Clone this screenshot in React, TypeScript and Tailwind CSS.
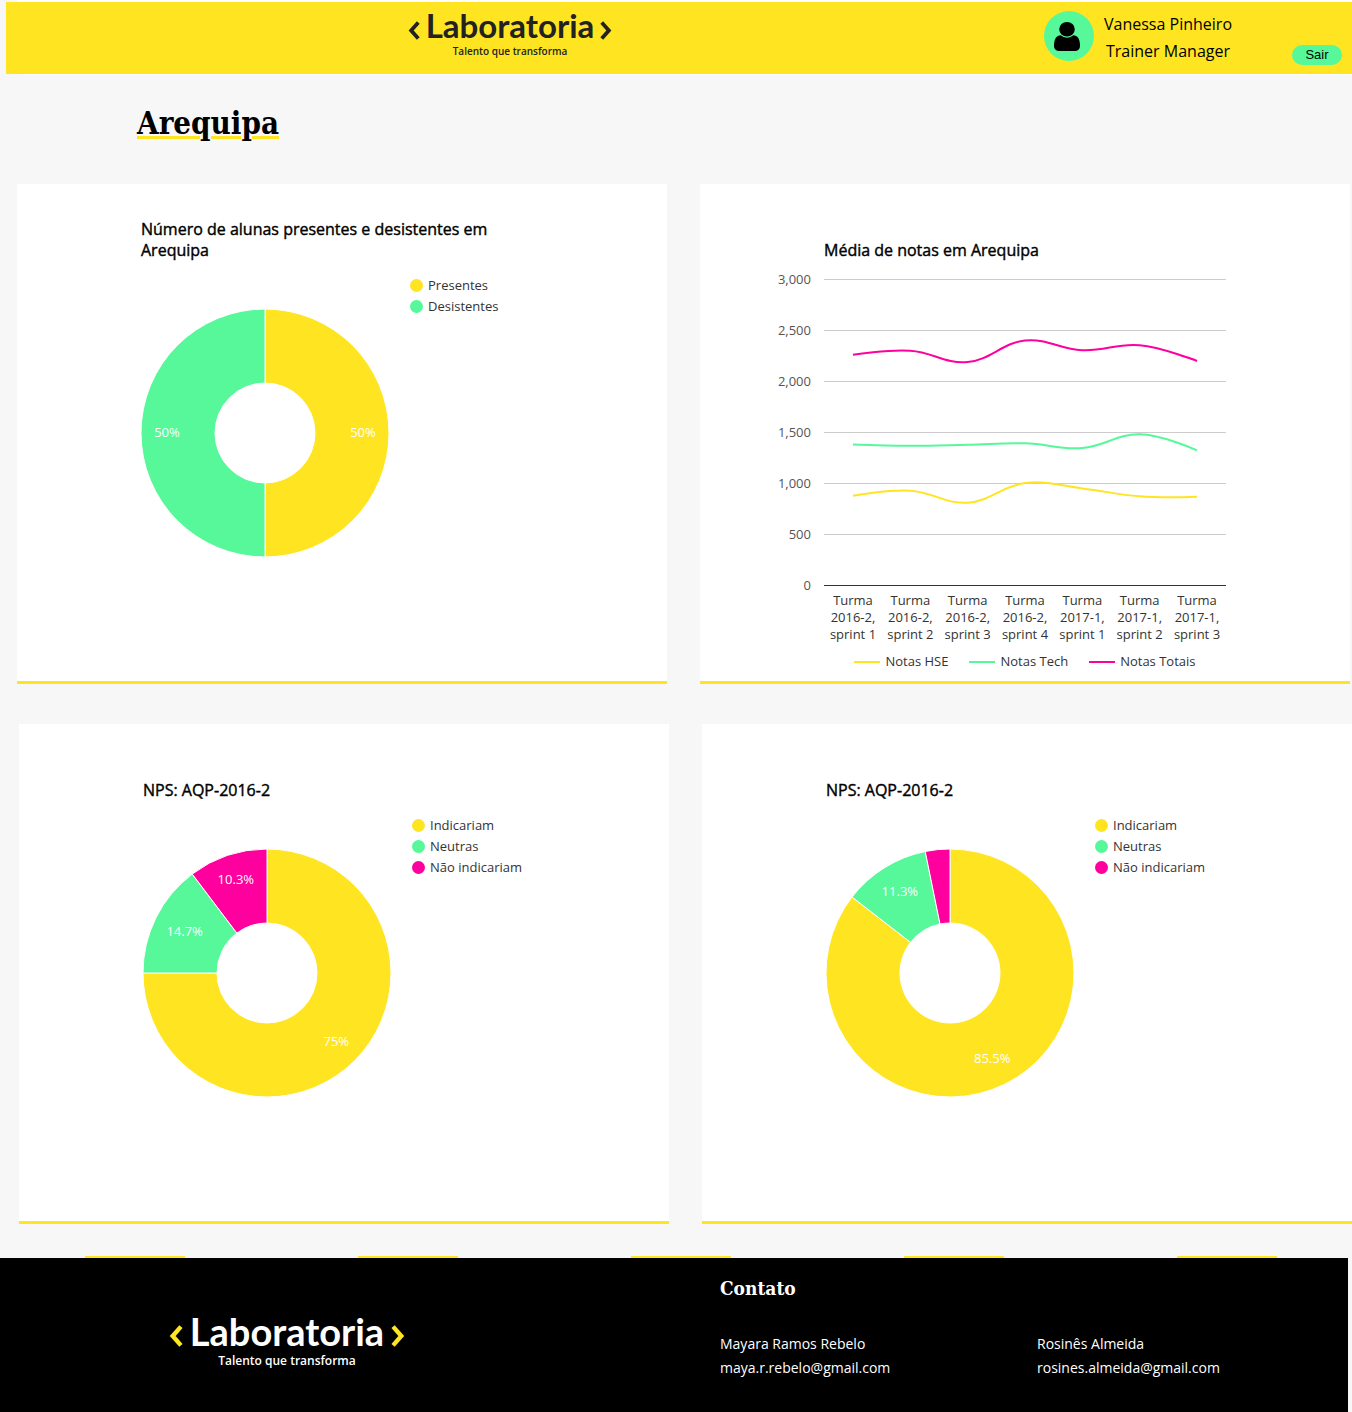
const YELLOW = "#ffe521";
const GREEN = "#56f89a";
const PINK = "#ff009e";

type Slice = { label: string; value: number; color: string; text?: string; textRadius?: number };

const attendance: Slice[] = [
  { label: "Presentes", value: 50, color: YELLOW, text: "50%" },
  { label: "Desistentes", value: 50, color: GREEN, text: "50%" },
];

const npsFirst: Slice[] = [
  { label: "Indicariam", value: 75, color: YELLOW, text: "75%" },
  { label: "Neutras", value: 14.7, color: GREEN, text: "14.7%", textRadius: 92 },
  { label: "Não indicariam", value: 10.3, color: PINK, text: "10.3%" },
];

const npsSecond: Slice[] = [
  { label: "Indicariam", value: 85.5, color: YELLOW, text: "85.5%", textRadius: 96 },
  { label: "Neutras", value: 11.3, color: GREEN, text: "11.3%", textRadius: 95 },
  { label: "Não indicariam", value: 3.2, color: PINK },
];

const RADIUS = 124;
const HOLE = 50;

function point(radius: number, share: number) {
  const angle = share * 2 * Math.PI;
  return [RADIUS + radius * Math.sin(angle), RADIUS - radius * Math.cos(angle)];
}

function Donut({ slices, title }: { slices: Slice[]; title: string }) {
  let start = 0;
  return (
    <svg viewBox="0 0 248 248" className="mt-[34px] h-[248px] w-[248px] shrink-0 overflow-visible" role="img" aria-label={title}>
      {slices.map((slice) => {
        const from = start;
        const to = start + slice.value / 100;
        start = to;
        const large = to - from > 0.5 ? 1 : 0;
        const [ax, ay] = point(RADIUS, from);
        const [bx, by] = point(RADIUS, to);
        const [cx, cy] = point(HOLE, to);
        const [dx, dy] = point(HOLE, from);
        const [tx, ty] = point(slice.textRadius ?? 98, (from + to) / 2);
        return (
          <g key={slice.label}>
            <path
              d={`M${ax} ${ay}A${RADIUS} ${RADIUS} 0 ${large} 1 ${bx} ${by}L${cx} ${cy}A${HOLE} ${HOLE} 0 ${large} 0 ${dx} ${dy}Z`}
              fill={slice.color}
              stroke="#ffffff"
              strokeWidth="1"
            />
            {slice.text && (
              <text x={tx} y={ty + 4} textAnchor="middle" fill="#ffffff" className="text-[13px]">
                {slice.text}
              </text>
            )}
          </g>
        );
      })}
    </svg>
  );
}

function Card({ title, children }: { title: string; children: React.ReactNode }) {
  return (
    <section className="min-h-[500px] border-b-3 border-[#ffe521] bg-white pt-[35px]">
      <div className="ml-[124px] flex h-[42px] w-[402px] items-end">
        <h2 className="text-base leading-[21px] text-black [-webkit-text-stroke:0.4px_black]">{title}</h2>
      </div>
      {children}
    </section>
  );
}

function DonutCard({ title, slices }: { title: string; slices: Slice[] }) {
  return (
    <Card title={title}>
      <div className="mt-[14px] ml-[124px] flex items-start gap-[21px]">
        <Donut slices={slices} title={title} />
        <ul className="text-[13px] leading-[21px] text-[#333333]">
          {slices.map((slice) => (
            <li key={slice.label} className="flex items-center gap-[5px]">
              <span className="h-[13px] w-[13px] rounded-full" style={{ backgroundColor: slice.color }} />
              {slice.label}
            </li>
          ))}
        </ul>
      </div>
    </Card>
  );
}

const sprints = [
  ["2016-2,", "sprint 1"],
  ["2016-2,", "sprint 2"],
  ["2016-2,", "sprint 3"],
  ["2016-2,", "sprint 4"],
  ["2017-1,", "sprint 1"],
  ["2017-1,", "sprint 2"],
  ["2017-1,", "sprint 3"],
];

const series = [
  { label: "Notas HSE", color: YELLOW, values: [880, 930, 812, 1004, 952, 874, 870] },
  { label: "Notas Tech", color: GREEN, values: [1383, 1369, 1380, 1394, 1348, 1482, 1325] },
  { label: "Notas Totais", color: PINK, values: [2263, 2302, 2191, 2402, 2306, 2355, 2200] },
];

const plotX = (i: number) => 83 + (i * 172) / 3;
const plotY = (value: number) => 316.5 - (value * 306) / 3000;

function smoothPath(values: number[]) {
  const pts = values.map((v, i) => [plotX(i), plotY(v)]);
  const slope = (i: number) => {
    if (i === 0 || i === pts.length - 1) return [0, 0];
    return [(pts[i + 1][0] - pts[i - 1][0]) / 5, (pts[i + 1][1] - pts[i - 1][1]) / 5];
  };
  return pts
    .map(([x, y], i) => {
      if (i === 0) return `M${x} ${y}`;
      const [px, py] = pts[i - 1];
      const [sx, sy] = slope(i - 1);
      const [ex, ey] = slope(i);
      return `C${px + sx} ${py + sy} ${x - ex} ${y - ey} ${x} ${y}`;
    })
    .join("");
}

function LineCard() {
  const title = "Média de notas em Arequipa";
  return (
    <Card title={title}>
      <svg viewBox="0 0 456 382" className="mt-[8px] ml-[70px] h-[382px] w-[456px]" role="img" aria-label={title}>
        {[0, 500, 1000, 1500, 2000, 2500, 3000].map((tick) => (
          <g key={tick}>
            <line x1="54" x2="456" y1={plotY(tick)} y2={plotY(tick)} stroke={tick ? "#cccccc" : "#333333"} />
            <text x="41" y={plotY(tick) + 4.5} textAnchor="end" fill="#555555" className="text-[13px]">
              {tick.toLocaleString("en-US")}
            </text>
          </g>
        ))}
        {series.map((s) => (
          <path key={s.label} d={smoothPath(s.values)} fill="none" stroke={s.color} strokeWidth="2" />
        ))}
        {sprints.map(([group, sprint], i) => (
          <text key={i} textAnchor="middle" fill="#333333" className="text-[13px]">
            <tspan x={plotX(i)} y="336">Turma</tspan>
            <tspan x={plotX(i)} y="353">{group}</tspan>
            <tspan x={plotX(i)} y="370">{sprint}</tspan>
          </text>
        ))}
      </svg>
      <ul className="ml-[124px] flex w-[402px] justify-center gap-[21px] text-[13px] leading-[21px] text-[#333333]">
        {series.map((s) => (
          <li key={s.label} className="flex items-center gap-[5px]">
            <span className="h-[2px] w-[26px]" style={{ backgroundColor: s.color }} />
            {s.label}
          </li>
        ))}
      </ul>
    </Card>
  );
}

function Chevron({ className, flip }: { className: string; flip?: boolean }) {
  return (
    <svg viewBox="0 0 12 20" className={className} fill="none" stroke="currentColor" strokeWidth="4" aria-hidden="true">
      <path d={flip ? "M1.5 1.5L9 10L1.5 18.5" : "M10.5 1.5L3 10L10.5 18.5"} />
    </svg>
  );
}

function UserIcon() {
  return (
    <svg viewBox="0 0 1280 1536" className="mr-1 h-[29px] w-[26px]" fill="currentColor" preserveAspectRatio="none" aria-hidden="true">
      <path d="M1280 1271q0 109-62.5 187t-150.5 78h-854q-88 0-150.5-78t-62.5-187q0-85 8.5-160.5t31.5-152 58.5-131 94-89 134.5-34.5q131 128 313 128t313-128q76 0 134.5 34.5t94 89 58.5 131 31.5 152 8.5 160.5zm-256-887q0 159-112.5 271.5t-271.5 112.5-271.5-112.5-112.5-271.5 112.5-271.5 271.5-112.5 271.5 112.5 112.5 271.5z" />
    </svg>
  );
}

export default function App() {
  return (
    <div className="bg-[#f7f7f7] font-['Open_Sans',sans-serif] text-black">
      <div className="ml-[17px] h-[2px] bg-white" />
      <header className="ml-[6px] flex h-[72px] justify-between bg-[#ffe521] pr-[10px] pl-[402px]">
        <div className="flex w-[204px] flex-col items-center pt-[5px] text-[#222222]">
          <div className="flex w-full items-center justify-between">
            <Chevron className="mt-[10px] h-[19px] w-[12px]" />
            <span className="font-[Lato] text-[33px] leading-[36px] font-bold">Laboratoria</span>
            <Chevron className="mt-[10px] h-[19px] w-[12px]" flip />
          </div>
          <span className="text-[10px] leading-[16px] font-semibold">Talento que transforma</span>
        </div>
        <div className="flex justify-end">
          <div className="mt-[9px] flex h-[50px] w-[50px] items-center justify-center rounded-full bg-[#56f89a]">
            <UserIcon />
          </div>
          <div className="ml-[10px] pt-[9px] text-center text-base leading-[27px]">
            <p>Vanessa Pinheiro</p>
            <p>Trainer Manager</p>
          </div>
          <button type="button" className="mt-[43px] ml-[60px] h-[20px] w-[50px] rounded-full bg-[#56f89a] font-['Liberation_Sans',sans-serif] text-[13px] leading-[20px]">
            Sair
          </button>
        </div>
      </header>
      <div className="ml-[23px] h-px bg-white" />
      <main>
        <h1 className="px-[137px] pt-[28px] pb-[41px] font-['DejaVu_Serif_Condensed','DejaVu_Serif',serif] text-[31px] leading-[40px] font-bold underline decoration-[#ffe521] decoration-3">
          Arequipa
        </h1>
        <div className="grid grid-cols-2 gap-x-[33px] pr-[2px] pl-[17px]">
          <DonutCard title="Número de alunas presentes e desistentes em Arequipa" slices={attendance} />
          <LineCard />
        </div>
        <div className="mt-10 grid grid-cols-2 gap-x-[33px] pl-[19px]">
          <DonutCard title="NPS: AQP-2016-2" slices={npsFirst} />
          <DonutCard title="NPS: AQP-2016-2" slices={npsSecond} />
        </div>
        <div className="mt-8 flex justify-between pr-[75px] pl-[85px]">
          {[0, 1, 2, 3, 4].map((i) => (
            <span key={i} className="h-[2px] w-[100px] bg-[#ffe521]" />
          ))}
        </div>
      </main>
      <footer className="mr-[4px] grid min-h-[154px] grid-cols-[720px_1fr] bg-black text-white">
        <div className="pt-[54px] pl-[169px]">
          <div className="flex w-[236px] flex-col items-center">
            <div className="flex w-full items-center justify-between">
              <Chevron className="mt-[10px] h-[22px] w-[14px] text-[#ffe521]" />
              <span className="font-[Lato] text-[38px] leading-[38px] font-bold">Laboratoria</span>
              <Chevron className="mt-[10px] h-[22px] w-[14px] text-[#ffe521]" flip />
            </div>
            <span className="text-[12px] leading-[22px] font-semibold">Talento que transforma</span>
          </div>
        </div>
        <div>
          <h2 className="pt-[18px] font-['DejaVu_Serif_Condensed','DejaVu_Serif',serif] text-[19px] leading-[24px] font-bold">Contato</h2>
          <address className="mt-[32px] grid grid-cols-[317px_1fr] text-sm leading-6 not-italic">
            <div>
              <p>Mayara Ramos Rebelo</p>
              <a href="mailto:maya.r.rebelo@gmail.com">maya.r.rebelo@gmail.com</a>
            </div>
            <div>
              <p>Rosinês Almeida</p>
              <a href="mailto:rosines.almeida@gmail.com">rosines.almeida@gmail.com</a>
            </div>
          </address>
        </div>
      </footer>
    </div>
  );
}
